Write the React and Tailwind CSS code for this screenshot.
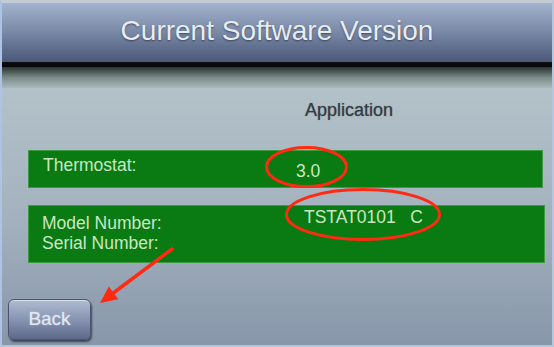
export default function App() {
    const font = { fontFamily: '"Liberation Sans", Arial, sans-serif' };

    return (
        <div
            className="relative w-[554px] h-[347px] overflow-hidden bg-[#b9c8da] border-l-2 border-r-2 border-b-2 border-t-[3px] border-l-[#aec2e6] border-r-[#b6c6dc] border-b-[#b4c4d8] border-t-[#c2ccd4]"
            style={font}
        >
            <div className="flex flex-col h-full">
                {/* header */}
                <div className="h-[59px] flex items-center justify-center pb-[4px] bg-gradient-to-b from-[#a4b4cd] via-[#7888a6] to-[#4c5877]">
                    <h1 className="text-[28px] leading-none text-[#e7edf3] [text-shadow:0_1px_2px_rgba(0,0,0,0.45)]">
                        Current Software Version
                    </h1>
                </div>
                <div className="h-[5px] bg-gradient-to-b from-[#0a0c14] to-[#05070a]" />
                <div className="h-[21px] bg-gradient-to-b from-[#2a3430] via-[#7a8a88] to-[#aab8bc]" />

                {/* body */}
                <div className="flex-1 flex flex-col bg-gradient-to-b from-[#b3c1c8] via-[#a4b2bf] to-[#8796a9]">
                    <div className="mt-[12px] ml-[303px] text-[18px] leading-[20px] text-[#343c44] [text-shadow:0_0_1px_rgba(40,48,56,0.6)]">
                        Application
                    </div>

                    <div className="mt-[30px] ml-[26px] w-[515px] h-[38px] flex items-start px-[14px] bg-[#0a7a12] border border-[#3c9a42] text-[17.5px] leading-[20px] text-[#c8e8c2]">
                        <div className="w-[253px] pt-[4px]">Thermostat:</div>
                        <div className="pt-[10px]">3.0</div>
                    </div>

                    <div className="mt-[17px] ml-[26px] w-[517px] h-[58px] flex items-start px-[13px] bg-[#0a7a12] border border-[#3c9a42] text-[17.5px] leading-[20px] text-[#c8e8c2]">
                        <div className="w-[262px] pt-[7px]">
                            <div>Model Number:</div>
                            <div>Serial Number:</div>
                        </div>
                        <div className="pt-[1px] whitespace-pre">TSTAT0101   C</div>
                    </div>

                    <button className="mt-[36px] ml-[6px] w-[83px] h-[41px] rounded-[6px] border border-[#4a5470] bg-gradient-to-b from-[#b0bcd2] via-[#8794b2] to-[#5d6989] text-[19px] text-[#e4e9f2] shadow-[1px_2px_2px_rgba(30,36,52,0.7),inset_0_1px_0_rgba(255,255,255,0.5)] [text-shadow:0_0_2px_rgba(255,255,255,0.4)]">
                        Back
                    </button>
                </div>
            </div>

            {/* annotations */}
            <svg
                className="absolute left-[-2px] top-[-3px] pointer-events-none"
                width="554"
                height="347"
                viewBox="0 0 554 347"
            >
                <ellipse cx="306.5" cy="167" rx="40" ry="19.5" fill="none" stroke="#ff2a12" strokeWidth="3" />
                <ellipse cx="363" cy="214.5" rx="76.5" ry="25" fill="none" stroke="#ff2a12" strokeWidth="3" />
                <line x1="172" y1="249" x2="110" y2="295.5" stroke="#ff2a12" strokeWidth="3.5" strokeLinecap="round" />
                <polygon points="100,303 108.8,286.4 118.4,299.2" fill="#ff2a12" />
            </svg>
        </div>
    );
}
